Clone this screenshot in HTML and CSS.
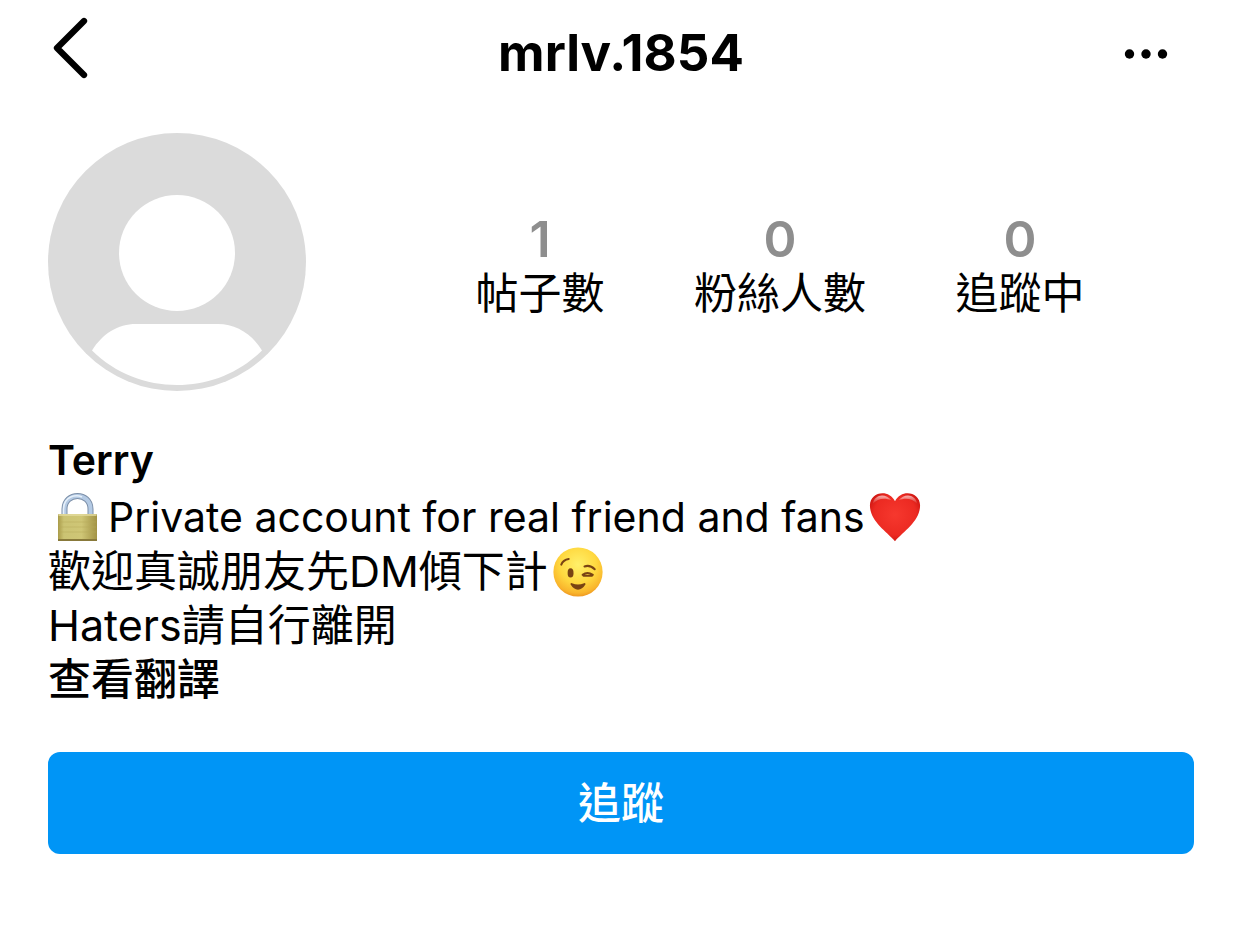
FILE: index.html
```html
<!DOCTYPE html>
<html lang="zh-Hant">

<head>
    <meta charset="UTF-8">
    <meta name="viewport" content="width=device-width, initial-scale=1.0">
    <title>mrlv.1854</title>
    <link rel="stylesheet" href="styles.css">
</head>

<body>
    <header class="top-bar">
        <button class="icon-btn" type="button" aria-label="返回">
            <svg width="48" height="64" viewBox="0 0 48 64" fill="none" stroke="#000" stroke-width="6.300" stroke-linecap="round" stroke-linejoin="round">
                <path d="M36 5L9 32L36 59" />
            </svg>
        </button>
        <h1 class="username">mrlv.1854</h1>
        <button class="icon-btn" type="button" aria-label="更多">
            <svg width="48" height="64" viewBox="0 0 48 64">
                <circle cx="7.500" cy="38" r="4.700" />
                <circle cx="24" cy="38" r="4.700" />
                <circle cx="40.500" cy="38" r="4.700" />
            </svg>
        </button>
    </header>
    <main class="profile">
        <section class="summary">
            <svg class="avatar" viewBox="0 0 258 258" role="img" aria-label="Terry">
                <circle cx="129" cy="129" r="129" fill="#dbdbdb" />
                <circle cx="129" cy="120" r="58" fill="#fff" />
                <path d="M44 217.500C54 201 70 191 88 191H170C188 191 204 201 214 217.500C190 241 160 252 129 252S68 241 44 217.500Z" fill="#fff" />
            </svg>
            <ul class="stats">
                <li><strong>1</strong><span>帖子數</span></li>
                <li><strong>0</strong><span>粉絲人數</span></li>
                <li><strong>0</strong><span>追蹤中</span></li>
            </ul>
        </section>
        <section class="bio">
            <h2>Terry</h2>
            <p lang="en">
                <svg class="emoji lock" viewBox="0 0 60 50" role="img" aria-label="🔒">
                    <defs>
                        <linearGradient id="brass" x2="1">
                            <stop offset="0" stop-color="#a99b49" />
                            <stop offset=".15" stop-color="#cbc373" />
                            <stop offset=".6" stop-color="#cfc676" />
                            <stop offset="1" stop-color="#a29345" />
                        </linearGradient>
                    </defs>
                    <path d="M16.500 25V17C16.500-.5 42.500-.5 42.500 17V25" fill="none" stroke="#7c8fa8" stroke-width="6" />
                    <path d="M16.500 25V17C16.500-.5 42.500-.5 42.500 17V25" fill="none" stroke="#b4cae4" stroke-width="4" />
                    <path d="M15.500 24V17C16 4 28 2 34 5" fill="none" stroke="#e6f0fa" stroke-width="1.500" />
                    <rect x="10" y="22" width="39" height="27" rx="1" fill="url(#brass)" />
                    <path d="M10.500 23H48.500" stroke="#e4dca0" stroke-width="1.500" />
                    <path d="M11 30H48M11 35H48M11 40H48" stroke="#b6ab59" stroke-width=".5" />
                    <path d="M10 48H49" stroke="#88793a" stroke-width="2" />
                </svg>Private account for real friend and fans<svg class="emoji" viewBox="0 0 60 56" role="img" aria-label="❤️">
                    <defs>
                        <radialGradient id="red" cx=".5" cy=".45" r=".6">
                            <stop offset="0" stop-color="#f6382e" />
                            <stop offset=".7" stop-color="#ec2a22" />
                            <stop offset="1" stop-color="#c9130f" />
                        </radialGradient>
                        <linearGradient id="shine" y2="1" x2="0">
                            <stop offset="0" stop-color="#fff" stop-opacity=".65" />
                            <stop offset="1" stop-color="#fff" stop-opacity="0" />
                        </linearGradient>
                    </defs>
                    <path d="M30 54C20 43 3 32 3 15.500C3 1 23-3 30 11C37-3 57 1 57 15.500C57 32 40 43 30 54Z" fill="url(#red)" />
                    <path d="M6 14C8 3 20 2 26 10C19 7 11 8 6 14ZM54 14C52 3 40 2 34 10C41 7 49 8 54 14Z" fill="url(#shine)" />
                </svg>
            </p>
            <p>
                歡迎真誠朋友先DM傾下計<svg class="emoji" viewBox="0 0 60 56" role="img" aria-label="😉">
                    <defs>
                        <radialGradient id="face" cx=".5" cy=".35" r=".68">
                            <stop offset="0" stop-color="#fff06a" />
                            <stop offset=".55" stop-color="#ffd83f" />
                            <stop offset=".85" stop-color="#f9b52c" />
                            <stop offset="1" stop-color="#ea8c1d" />
                        </radialGradient>
                    </defs>
                    <circle cx="30" cy="28" r="26.500" fill="url(#face)" />
                    <ellipse cx="22" cy="29" rx="3.200" ry="5" fill="#794313" />
                    <g fill="none" stroke="#794313" stroke-width="2.200" stroke-linecap="round" stroke-linejoin="round">
                        <path d="M12 20Q14 15 20 14M37 22Q43 20 48 25M35 31Q40 27 46 31M36 32H45" />
                        <path d="M23 41Q30 44 37 41Q34 46 30 46T23 41Z" fill="#794313" />
                    </g>
                </svg><br>
                Haters請自行離開
            </p>
            <a class="translate" href="#">查看翻譯</a>
        </section>
        <button class="follow-btn" type="button">追蹤</button>
    </main>
</body>

</html>
```
FILE: styles.css
```css
* {
    box-sizing: border-box;
}

body {
    margin: 0;
    background-color: #fff;
    color: #000;
    font-family: Inter, "Noto Sans CJK TC", sans-serif;
    font-size: 43px;
    line-height: 54px;
}

button {
    border: 0;
    font: inherit;
    cursor: pointer;
}

.top-bar {
    display: flex;
    justify-content: space-between;
    align-items: center;
    height: 96px;
    padding: 0 48px;
}

.icon-btn {
    width: 72px;
    padding: 0;
    background: none;
    text-align: left;
}

.icon-btn svg {
    display: block;
}

.username {
    margin: 10px 0 0;
    font-size: 51px;
    font-weight: 700;
}

.profile {
    padding: 37px 48px 48px;
}

.summary {
    display: flex;
    align-items: center;
}

.avatar {
    flex: none;
    width: 258px;
    height: 258px;
}

.stats {
    display: grid;
    grid-template-columns: repeat(3, 1fr);
    flex: 1;
    margin: 0 54px 0 114px;
    padding: 8px 0 0;
    list-style: none;
    text-align: center;
    white-space: nowrap;
}

.stats strong,
.stats span {
    display: block;
}

.stats strong {
    color: #8e8e8e;
    font-size: 50px;
    font-weight: 600;
}

.bio {
    margin-top: 42px;
}

.bio h2 {
    margin: 0 0 3px;
    font-size: 41px;
    font-weight: 600;
    line-height: 54px;
}

.bio p {
    margin: 0;
}

.bio p:lang(en) {
    font-size: 41px;
}

.emoji {
    width: 60px;
    height: 52px;
    margin: -4px 0;
    vertical-align: -7px;
}

.lock {
    height: 50px;
    vertical-align: -6px;
}

.translate {
    color: #000;
    font-weight: 500;
    text-decoration: none;
}

.follow-btn {
    display: block;
    width: 100%;
    height: 102px;
    margin-top: 46px;
    border-radius: 12px;
    background-color: #0095f6;
    color: #fff;
    font-weight: 500;
}
```
